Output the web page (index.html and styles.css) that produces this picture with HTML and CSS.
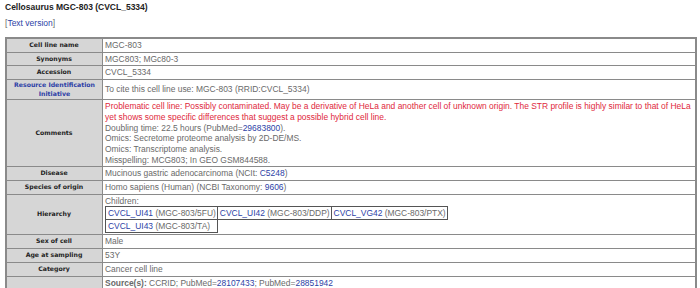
FILE: index.html
```html
<!DOCTYPE html>
<html>
<head>
<meta charset="utf-8">
<link rel="stylesheet" href="styles.css">
</head>
<body>
<div class="title">Cellosaurus MGC-803 (CVCL_5334)</div>
<div class="textver">[<a href="#">Text version</a>]</div>
<table class="main">
<tr><th>Cell line name</th><td>MGC-803</td></tr>
<tr><th>Synonyms</th><td>MGC803; MGc80-3</td></tr>
<tr><th>Accession</th><td>CVCL_5334</td></tr>
<tr class="rii"><th><a href="#">Resource Identification Initiative</a></th><td>To cite this cell line use: MGC-803 (RRID:CVCL_5334)</td></tr>
<tr><th>Comments</th><td><span class="red">Problematic cell line: Possibly contaminated. May be a derivative of HeLa and another cell of unknown origin. The STR profile is highly similar to that of HeLa yet shows some specific differences that suggest a possible hybrid cell line.</span><br>Doubling time: 22.5 hours (PubMed=<a href="#">29683800</a>).<br>Omics: Secretome proteome analysis by 2D-DE/MS.<br>Omics: Transcriptome analysis.<br>Misspelling: MCG803; In GEO GSM844588.</td></tr>
<tr><th>Disease</th><td>Mucinous gastric adenocarcinoma (NCIt: <a href="#">C5248</a>)</td></tr>
<tr><th>Species of origin</th><td>Homo sapiens (Human) (NCBI Taxonomy: <a href="#">9606</a>)</td></tr>
<tr><th>Hierarchy</th><td>Children:<div class="kids"><span class="kid"><a href="#">CVCL_UI41</a> (MGC-803/5FU)</span><span class="kid"><a href="#">CVCL_UI42</a> (MGC-803/DDP)</span><span class="kid"><a href="#">CVCL_VG42</a> (MGC-803/PTX)</span><span class="kid"><a href="#">CVCL_UI43</a> (MGC-803/TA)</span></div></td></tr>
<tr><th>Sex of cell</th><td>Male</td></tr>
<tr><th>Age at sampling</th><td>53Y</td></tr>
<tr><th>Category</th><td>Cancer cell line</td></tr>
<tr><th></th><td><b>Source(s):</b> CCRID; PubMed=<a href="#">28107433</a>; PubMed=<a href="#">28851942</a></td></tr>
</table>
</body>
</html>
```
FILE: styles.css
```css
body {
  margin: 0;
  padding: 2px 5px 0 5px;
  font-family: "Liberation Sans", Arial, sans-serif;
  font-size: 8.45px;
  color: #6a6a6a;
  background: #fff;
}
a { color: #2d3fa6; text-decoration: none; }
.title {
  font-weight: bold;
  font-size: 8.5px;
  color: #222;
  line-height: 11px;
}
.textver {
  margin-top: 5px;
  font-size: 8.5px;
  line-height: 11px;
  height: 19px;
}
.main {
  width: 692px;
  border-collapse: collapse;
  border: 2px solid #8a8a8a;
}
.main th, .main td {
  border: 1px solid #8a8a8a;
  line-height: 10.7px;
  padding: 1px 3px 1px 2px;
  vertical-align: middle;
  text-align: left;
}
.main th {
  width: 90px;
  background: #d6d6d6;
  font-family: "DejaVu Sans", Verdana, sans-serif;
  font-size: 6.2px;
  color: #222;
  text-align: center;
}
.main .rii th { line-height: 8.5px; padding: 1px 2px; }
.red { color: #e0283c; }
.kids {
  display: grid;
  grid-template-columns: repeat(3, max-content);
  padding: 0 0 1px 0;
}
.kid {
  border: 1px solid #555;
  padding: 0 1px 0 2px;
  line-height: 12px;
  margin: 0 -1px -1px 0;
}
```
